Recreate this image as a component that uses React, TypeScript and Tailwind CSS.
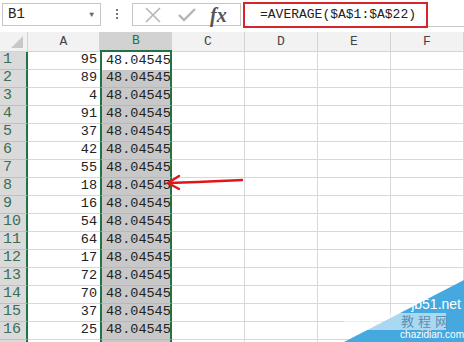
import React from "react";

const GREEN = "#217346";
const values = [95, 89, 4, 91, 37, 42, 55, 18, 16, 54, 64, 17, 72, 70, 37, 25];
const cols = ["C", "D", "E", "F"];

const App: React.FC = () => {
  return (
    <div
      className="relative w-[464px] h-[342px] overflow-hidden bg-white text-[#222]"
      style={{ fontFamily: '"Liberation Mono", "Noto Sans CJK SC", monospace' }}
    >
      {/* formula bar */}
      <div className="flex h-[32px] items-start pt-[3px] bg-white">
        <div className="ml-[2px] flex h-[23px] w-[99px] items-center justify-between border border-[#c6c6c6] pl-[5px] pr-[6px] text-[14px]">
          <span>B1</span>
          <span className="text-[8px] text-[#666]">▼</span>
        </div>
        <div className="flex w-[31px] flex-col items-center justify-center gap-[2px] pt-[6px]">
          <span className="h-[2px] w-[2px] bg-[#777]" />
          <span className="h-[2px] w-[2px] bg-[#777]" />
          <span className="h-[2px] w-[2px] bg-[#777]" />
        </div>
        <div className="flex h-[23px] w-[109px] items-center border border-[#c6c6c6] pl-[11px]">
          <svg width="18" height="18" viewBox="0 0 18 18">
            <path d="M2 2 L16 16 M16 2 L2 16" stroke="#b5b5b5" strokeWidth="1.6" />
          </svg>
          <svg width="20" height="18" viewBox="0 0 20 18" className="ml-[15px]">
            <path d="M2 9 L7 14 L18 3" stroke="#b5b5b5" strokeWidth="2.4" fill="none" />
          </svg>
          <span
            className="ml-[13px] text-[20px] font-bold italic text-[#555]"
            style={{ fontFamily: '"Liberation Serif", serif' }}
          >
            fx
          </span>
        </div>
        <div className="-mt-[1px] ml-[2px] flex h-[26px] flex-1 items-start">
          <div className="flex h-[26px] w-[185px] items-center border-2 border-[#d7262b] pl-[15px] text-[13px]">
            =AVERAGE($A$1:$A$22)
          </div>
          <div className="h-[25px] flex-1 border-b border-[#c6c6c6]" />
        </div>
      </div>

      {/* column headers */}
      <div className="flex h-[20px] bg-[#f2f2f2] text-[13px] text-[#444]">
        <div className="relative w-[28px] border-r border-b border-[#d4d4d4]">
          <svg width="12" height="12" viewBox="0 0 12 12" className="absolute right-[4px] bottom-[3px]">
            <path d="M12 0 L12 12 L0 12 Z" fill="#c8c8c8" />
          </svg>
        </div>
        <div className="flex w-[72px] items-center justify-center border-r border-b border-[#d4d4d4]">A</div>
        <div
          className="flex w-[72px] items-center justify-center border-b-2 bg-[#d2d2d2]"
          style={{ borderColor: GREEN, color: GREEN }}
        >
          B
        </div>
        {cols.map((c) => (
          <div key={c} className="flex w-[73px] items-center justify-center border-r border-b border-[#d4d4d4]">
            {c}
          </div>
        ))}
      </div>

      {/* rows */}
      {values.map((v, i) => (
        <div key={i} className="flex h-[18px] text-[13.5px]">
          <div
            className="flex w-[28px] items-center border-r-2 border-b border-b-[#c0c0c0] bg-[#dadada] pl-[3px] text-[#3b6e55]"
            style={{ borderRightColor: GREEN, fontSize: 15 }}
          >
            {i + 1}
          </div>
          <div className="flex w-[72px] items-center justify-end border-b border-[#d8d8d8] pr-[3px]">{v}</div>
          <div
            className={
              "flex w-[72px] items-center border-x-2 pl-[4px] " +
              (i === 0 ? "bg-white" : "bg-[#c8c8c8] border-b border-b-[#b8b8b8]")
            }
            style={{ borderLeftColor: GREEN, borderRightColor: GREEN }}
          >
            48.04545
          </div>
          {cols.map((c) => (
            <div key={c} className="w-[73px] border-r border-b border-[#d8d8d8]" />
          ))}
        </div>
      ))}
      <div className="flex h-[4px]">
        <div className="w-[28px] border-r-2 bg-[#dadada]" style={{ borderRightColor: GREEN }} />
        <div className="w-[72px]" />
        <div className="w-[72px] border-x-2 bg-[#c8c8c8]" style={{ borderLeftColor: GREEN, borderRightColor: GREEN }} />
        {cols.map((c) => (
          <div key={c} className="w-[73px] border-r border-[#d8d8d8]" />
        ))}
      </div>

      {/* red hand-drawn arrow */}
      <svg className="absolute left-0 top-0" width="464" height="342" viewBox="0 0 464 342">
        <path d="M242 180 C220 181 200 182 169 183" stroke="#e0161c" strokeWidth="2.4" fill="none" strokeLinecap="round" />
        <path d="M179 176 L168 183 L179 189" stroke="#e0161c" strokeWidth="2.4" fill="none" strokeLinecap="round" />
      </svg>

      {/* watermark */}
      <div className="pointer-events-none absolute right-0 bottom-0 h-[62px] w-[120px]">
        <svg className="absolute inset-0" width="120" height="62" viewBox="0 0 120 62">
          <path d="M120 0 L120 62 L0 62 Z" fill="#45a9e0" />
          <rect x="-30" y="33" width="132" height="17" fill="#ffffff" fillOpacity="0.55" />
        </svg>
        <span
          className="absolute right-[3px] top-[17px] text-[14px] leading-none text-white"
          style={{ fontFamily: '"Liberation Sans", sans-serif' }}
        >
          jb51.net
        </span>
        <span
          className="absolute right-[12px] top-[34px] text-[13px] leading-none tracking-[4px] text-[#5a8fb0]"
          style={{ fontFamily: '"Noto Sans CJK SC", sans-serif' }}
        >
          教程网
        </span>
        <span
          className="absolute right-[0px] bottom-[2px] text-[10px] leading-none text-white"
          style={{ fontFamily: '"Liberation Sans", sans-serif' }}
        >
          chazidian.com
        </span>
      </div>
    </div>
  );
};

export default App;
